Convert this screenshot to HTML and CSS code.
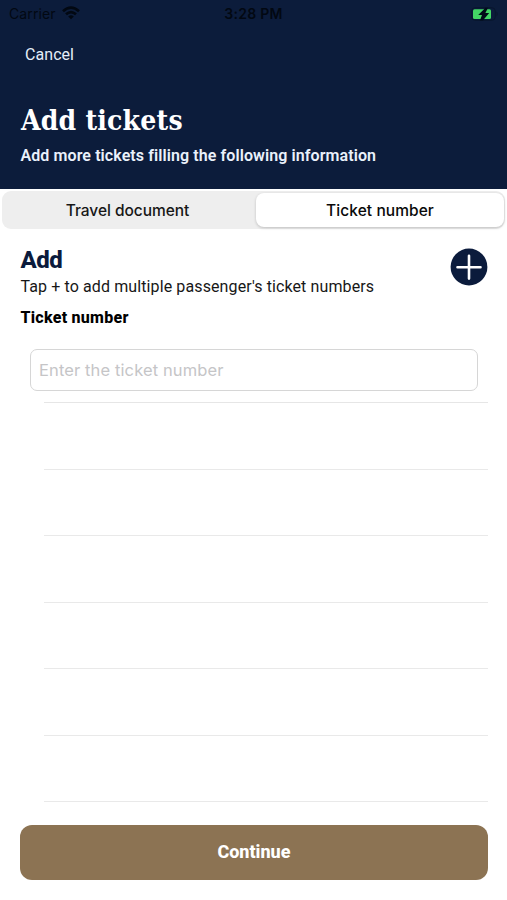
FILE: index.html
```html
<!DOCTYPE html>
<html lang="en">
<head>
<meta charset="utf-8">
<title>Add tickets</title>
<link rel="stylesheet" href="styles.css">
</head>
<body>
<header class="header">
  <div class="status">
    <div class="carrier"><span class="carrier-name">Carrier</span>
      <svg class="wifi" viewBox="0 0 18 14" width="18" height="14"><g fill="none" stroke="#020812" stroke-width="2.7"><path d="M1 5.2Q9-1.8 17 5.2"/><path d="M4 8.3Q9 4 14 8.3"/></g><path d="M6.2 10.5Q9 8.2 11.8 10.5L9 13.2Z" fill="#020812"/></svg>
    </div>
    <time class="clock">3:28 PM</time>
    <svg class="battery" viewBox="0 0 28 14" width="28" height="14"><rect x=".7" y=".7" width="23.6" height="12.6" rx="3.5" fill="none" stroke="#08162d"/><path d="M25.5 4.5Q28 7 25.5 9.5Z" fill="#08162d"/><rect x="2" y="2.3" width="18" height="9.6" rx="1.5" fill="#43d765"/><path d="M14.5.8 7.2 8H11l-2.1 5.6h3L18.2 6h-3.8L17 .8Z" fill="#020c18"/></svg>
  </div>
  <a class="cancel">Cancel</a>
  <h1 class="title">Add tickets</h1>
  <p class="subtitle">Add more tickets filling the following information</p>
</header>
<main class="content">
  <div class="segments">
    <div class="segment travel">Travel document</div>
    <div class="segment selected">Ticket number</div>
  </div>
  <section class="intro">
    <div>
      <h2 class="add">Add</h2>
      <p class="hint">Tap + to add multiple passenger's ticket numbers</p>
    </div>
    <svg class="plus" viewBox="0 0 38 38" width="38" height="38"><circle cx="19" cy="19" r="18.4" fill="#0b1b3c"/><path d="M19 7.8v22.8M7.5 19.2h23" stroke="#fff" stroke-width="2.6" stroke-linecap="round"/></svg>
  </section>
  <h3 class="label">Ticket number</h3>
  <input class="field" type="text" placeholder="Enter the ticket number">
  <div class="rows"><div></div><div></div><div></div><div></div><div></div><div></div></div>
  <button class="continue">Continue</button>
</main>
</body>
</html>
```
FILE: styles.css
```css
* { box-sizing: border-box; }
body { margin: 0; width: 507px; height: 900px; overflow: hidden; background: #fff; font-family: Roboto, sans-serif; color: #171717; }
h1, h2, h3, p { margin: 0; white-space: nowrap; }
svg { display: block; }
.header { height: 189px; background: #0c1c3b; color: #fff; }
.status { height: 28px; padding: 0 8px 0 9px; display: grid; grid-template-columns: 1fr auto 1fr; align-items: center; color: #020812; font: 400 14px/28px Inter, sans-serif; }
.carrier { display: flex; align-items: center; gap: 6px; }
.carrier-name { letter-spacing: .1px; }
.wifi { margin-top: -2px; }
.clock { font-weight: 600; letter-spacing: .3px; margin-left: -1px; }
.battery { justify-self: end; margin-top: -1px; }
.cancel { display: block; width: max-content; margin: 17px 0 0 25px; font-size: 16px; line-height: 20px; color: #e6eef9; letter-spacing: .06px; }
.title { margin: 38px 0 0 21px; font: 700 28px/36px "DejaVu Serif Condensed", "DejaVu Serif", serif; letter-spacing: .22px; }
.subtitle { margin: 7px 0 0 20.5px; font-size: 16px; font-weight: 600; line-height: 20px; color: #eaf1fb; letter-spacing: .09px; }
.content { padding-top: 2px; }
.segments { height: 38px; margin: 0 2px; padding: 2px 1px; display: grid; grid-template-columns: 253px 248px; background: #eee; border-radius: 9px; }
.segment { text-align: center; font: 500 15.5px/35px Inter, sans-serif; }
.travel { font-weight: 450; padding-right: 4px; letter-spacing: -.04px; }
.selected { height: 34px; background: #fff; border-radius: 8px; box-shadow: 0 1px 3px #0003; color: #090909; letter-spacing: .07px; }
.intro { display: flex; justify-content: space-between; margin: 16px 19px 0 20.5px; }
.add { font-size: 24px; line-height: 30px; color: #0b1b3c; font-weight: 800; letter-spacing: -.5px; }
.hint { font-size: 16px; line-height: 20px; margin-top: 2px; letter-spacing: .11px; }
.plus { margin-top: 3px; }
.label { margin: 11px 0 0 20.5px; font-size: 16px; line-height: 20px; font-weight: 800; color: #000; letter-spacing: .26px; }
.field { display: block; width: 448px; height: 42px; margin: 21px 0 0 30px; padding: 0 8px 1px; border: 1.5px solid #d6d6d6; border-radius: 7px; background: #fff; font: 400 16.5px Inter, sans-serif; letter-spacing: .12px; outline: 0; }
.field::placeholder { color: #c5c5c7; opacity: 1; }
.rows { height: 400px; margin: 11px 19px 0 44px; border-top: 1px solid #e6e6e6; display: grid; grid-template-rows: repeat(6, 1fr); }
.rows div { border-bottom: 1px solid #e9e9e9; }
.continue { display: block; width: 467.5px; height: 55px; margin: 23.4px 0 0 20.2px; padding: 0 0 2px; border: 0; border-radius: 12px; background: #8c7353; color: #fff; font: 800 18px Roboto, sans-serif; }
```
